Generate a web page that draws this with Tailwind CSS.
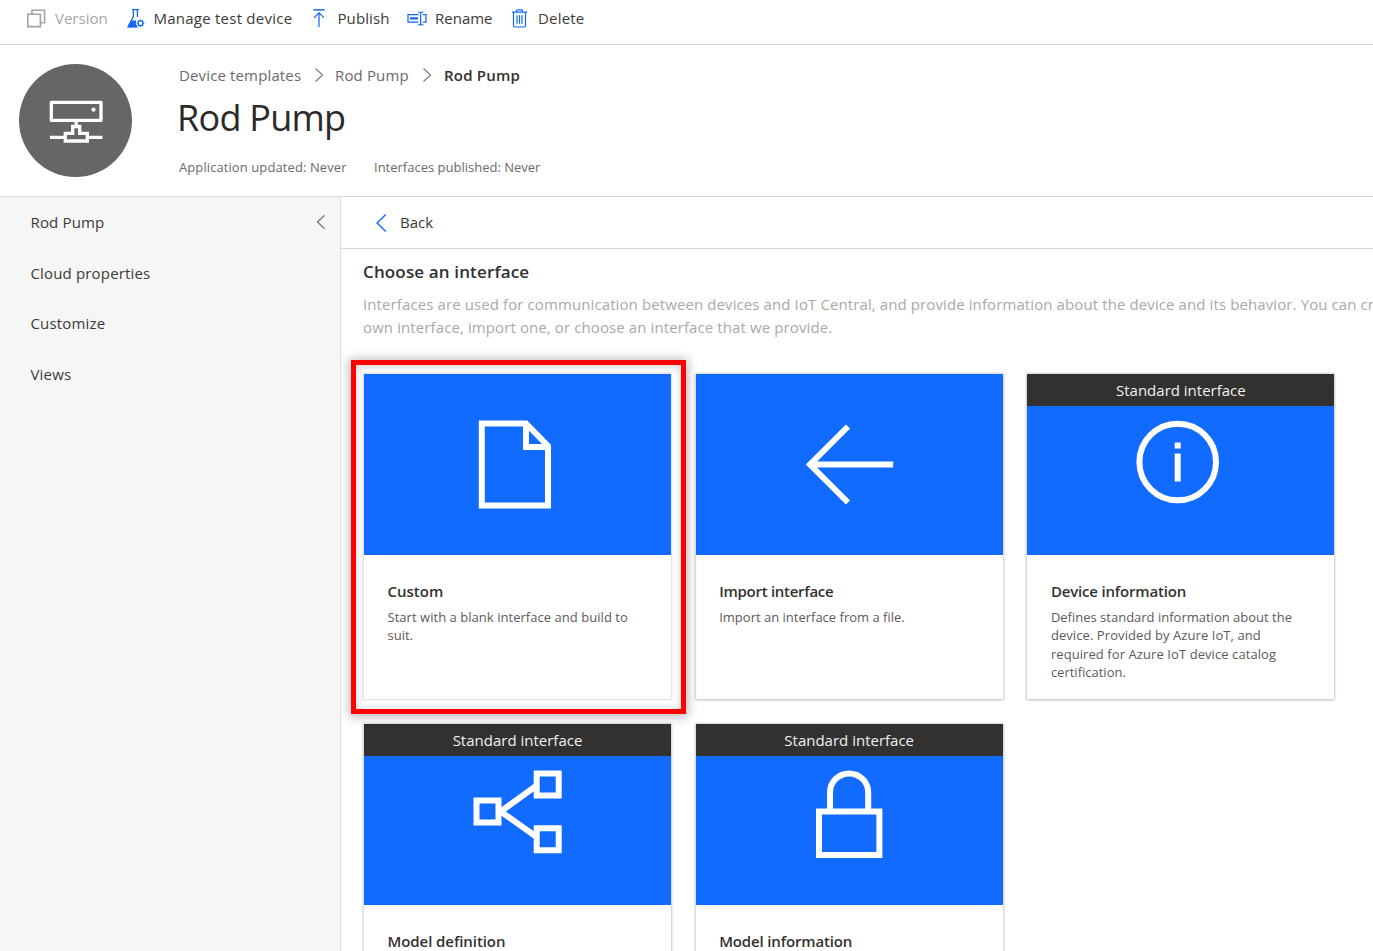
<!DOCTYPE html>
<html lang="en">
<head>
<meta charset="utf-8">
<title>Rod Pump - Device templates</title>
<script src="https://cdn.jsdelivr.net/npm/@tailwindcss/browser@4"></script>
</head>
<body class="h-[951px] w-[1373px] overflow-hidden bg-white font-['Open_Sans',sans-serif] text-[15px] text-[#3b3a39]">
<div class="flex h-full flex-col overflow-hidden">
  <!-- Command bar -->
  <nav class="flex h-[45px] shrink-0 border-b border-[#d9d9d9] pl-[26px] leading-[37px]">
    <div class="flex w-[101px] text-[#a6a6a6]">
      <svg class="mt-[9px] mr-[9px] h-[19px] w-[20px] shrink-0" viewBox="0 0 20 19" fill="none" stroke="#a3a3a3" stroke-width="1.6"><path d="M1.8 5.2h12.6v12.4H1.8zM6 5V1.2h12.6v12.6h-4"/></svg>
      <span>Version</span>
    </div>
    <div class="flex w-[183px]">
      <svg class="mt-[8px] mr-[8.500px] h-[20px] w-[18px] shrink-0" viewBox="0 0 18 20" fill="none" stroke="#1168f5" stroke-width="1.3"><path d="M5 1.7h7M6.4 2v6.6L1.4 18.6h7.8M10.4 2v7"/><path d="M4.2 13.2h4.2l-.2 3 1.6 2.6H1.2z" fill="#1168f5"/><circle cx="13.5" cy="15.2" r="2.4"/><path d="M13.5 11.4v1.4M13.5 17.6V19M9.7 15.2h1.4M15.9 15.2h1.4M10.8 12.5l1 1M15.2 16.9l1 1M16.2 12.5l-1 1M11.8 16.9l-1 1" stroke-width="1.1"/></svg>
      <span class="tracking-[0.240px]">Manage test device</span>
    </div>
    <div class="flex w-[97px]">
      <svg class="mt-[8px] mr-[9.500px] h-[20px] w-[18px] shrink-0" viewBox="0 0 18 20" fill="none" stroke="#1168f5" stroke-width="1.2"><path d="M3.5 1.900h11" stroke-width="1.5"/><path d="M9 19V5M4 9.800l5-5 5 5"/></svg>
      <span class="tracking-[0.100px]">Publish</span>
    </div>
    <div class="flex w-[104px]">
      <svg class="mt-[10px] mr-[8px] h-[17px] w-[20px] shrink-0" viewBox="0 0 20 17" fill="none" stroke="#1168f5" stroke-width="1.2"><path d="M11.5 4.6H1v7.6h10.5M16 4.6h3v7.6h-3"/><path d="M3 8.4h8" stroke-width="2.2"/><path d="M11 2c1.600 0 2.700.3 2.700 1.500v10c0 1.200-1.100 1.500-2.700 1.500M16.500 2c-1.600 0-2.800.3-2.800 1.500v10c0 1.200 1.200 1.500 2.800 1.500"/></svg>
      <span>Rename</span>
    </div>
    <div class="flex">
      <svg class="mt-[8px] mr-[10px] h-[20px] w-[17px] shrink-0" viewBox="0 0 17 20" fill="none" stroke="#1168f5" stroke-width="1.2"><path d="M1 4.200h15M2.500 4.400v13.400q0 1.200 1.200 1.200h9.600q1.200 0 1.200-1.200V4.400M5.500 4V2.800q0-1 1-1h4q1 0 1 1V4M6 7.200v8.600M8.500 7.200v8.600M11 7.200v8.600"/></svg>
      <span class="tracking-[0.200px]">Delete</span>
    </div>
  </nav>

  <!-- Template header -->
  <header class="flex h-[152px] shrink-0 border-b border-[#d9d9d9] pl-[19px]">
    <svg class="mt-[19px] h-[113px] w-[113px] shrink-0" viewBox="0 0 113 113" fill="none" stroke="#fff" stroke-width="3.3">
      <circle cx="56.500" cy="56.500" r="56.500" fill="#666" stroke="none"/>
      <rect x="32.300" y="38.300" width="49.700" height="18" stroke-linejoin="round"/>
      <circle cx="74.500" cy="45.700" r="2.100" fill="#fff" stroke="none"/>
      <path d="M57.200 57v5M31 73.400h15M69 73.400h14.500M53.700 69.300V62.500h7v6.800h7.600V77H46.300v-7.700z"/>
    </svg>
    <div class="flex flex-col pl-[47px]">
      <div class="box-content flex h-[22px] items-center pt-[19px] tracking-[0.140px] text-[#6a6a6a]">
        <span class="w-[135px]">Device templates</span>
        <svg class="mr-[11px] h-[14px] w-[10px]" viewBox="0 0 10 14" fill="none" stroke="#777" stroke-width="1.100"><path d="M1.500.5L8.500 7l-7 6.500"/></svg>
        <span class="w-[87px]">Rod Pump</span>
        <svg class="mr-[12px] h-[14px] w-[10px]" viewBox="0 0 10 14" fill="none" stroke="#777" stroke-width="1.100"><path d="M1.500.5L8.500 7l-7 6.500"/></svg>
        <span class="font-semibold tracking-[0.200px] text-[#323130]">Rod Pump</span>
      </div>
      <h1 class="mt-[7px] -ml-[2px] text-[36px] leading-[50px] tracking-[-0.750px] text-[#2b2a29]">Rod Pump</h1>
      <div class="mt-[14px] flex text-[13px] leading-[20px] text-[#6a6a6a]">
        <span class="w-[195px] tracking-[0.090px]">Application updated: Never</span>
        <span>Interfaces published: Never</span>
      </div>
    </div>
  </header>

  <div class="flex min-h-0 flex-1">
    <!-- Side navigation -->
    <aside class="flex w-[341px] shrink-0 flex-col gap-[26.700px] border-r border-[#dcdcdc] bg-[#f6f6f6] pt-[13px] pr-[14px] pl-[30.500px] leading-[24px] tracking-[0.160px]">
      <div class="flex items-center justify-between"><span>Rod Pump</span>
        <svg class="h-[14px] w-[10px]" viewBox="0 0 10 14" fill="none" stroke="#666" stroke-width="1.100"><path d="M8.500.3L1.500 7l7 6.700"/></svg>
      </div>
      <div>Cloud properties</div>
      <div>Customize</div>
      <div>Views</div>
    </aside>

    <main class="flex min-w-0 flex-1 flex-col overflow-hidden">
      <div class="flex h-[52px] shrink-0 items-center border-b border-[#d9d9d9] pl-[34px]">
        <svg class="mr-[13px] h-[18px] w-[12px]" viewBox="0 0 12 18" fill="none" stroke="#1168f5" stroke-width="1.400"><path d="M10.800.5L2 9l8.800 8.500"/></svg>
        <span>Back</span>
      </div>
      <div class="pl-[22px]">
        <h2 class="mt-[11px] text-[17px] leading-[24px] font-semibold tracking-[0.140px] text-[#323130]">Choose an interface</h2>
        <p class="mt-[9px] leading-[23px] tracking-[0.103px] whitespace-nowrap text-[#a9a9a9]"><span>Interfaces are used for communication between devices and IoT Central, and provide information about the device and its behavior. You can create your</span><br><span>own interface, import one, or choose an interface that we provide.</span></p>
      </div>

      <div class="mt-[35px] ml-[23px] grid grid-cols-[307px_307px_307px] gap-x-[24.700px] gap-y-[25px]">
        <section class="relative h-[325px] bg-white">
          <div class="pointer-events-none absolute -top-[14px] -left-[13px] h-[354px] w-[335px] border-5 border-[#fe0000] shadow-[0_1px_10px_2px_rgba(0,0,0,0.27),inset_0_1px_8px_rgba(0,0,0,0.2)]"></div>
          <div class="relative h-full bg-white shadow-[0_0_2px_1px_rgba(0,0,0,0.15)]">
            <svg class="block h-[181px] w-[307px] bg-[#126bff]" viewBox="0 0 307 181" fill="none" stroke="#fff" stroke-width="6"><path d="M117.800 49.500H162l22 22.500v59.500h-66.200zM162 49.500V73h22"/></svg>
            <div class="px-[23.500px] pt-[25px]">
              <h3 class="leading-[22px] font-semibold text-[#323130]">Custom</h3>
              <p class="mt-[6px] text-[13px] leading-[18.400px] tracking-[0.040px] whitespace-nowrap text-[#5c5b5a]">Start with a blank interface and build to<br>suit.</p>
            </div>
          </div>
        </section>

        <section class="h-[325px] bg-white shadow-[0_0_2px_1px_rgba(0,0,0,0.15),0_1px_3px_rgba(0,0,0,0.15)]">
          <svg class="block h-[181px] w-[307px] bg-[#126bff]" viewBox="0 0 307 181" fill="none" stroke="#fff" stroke-width="6"><path d="M197.200 90.500H114M152 52.500l-38 38 38 38"/></svg>
          <div class="px-[23.500px] pt-[25px]">
            <h3 class="leading-[22px] font-semibold tracking-[-0.280px] text-[#323130]">Import interface</h3>
            <p class="mt-[6px] text-[13px] leading-[18.400px] whitespace-nowrap text-[#5c5b5a]">Import an interface from a file.</p>
          </div>
        </section>

        <section class="h-[325px] bg-white shadow-[0_0_2px_1px_rgba(0,0,0,0.15),0_1px_3px_rgba(0,0,0,0.15)]">
          <div class="h-[32px] bg-[#323130] text-center leading-[33px] text-[#f0f0f0]">Standard interface</div>
          <svg class="block h-[149px] w-[307px] bg-[#126bff]" viewBox="0 0 307 149" fill="none" stroke="#fff" stroke-width="6"><circle cx="150.700" cy="56" r="38.300"/><path d="M150.700 36.500v6M150.700 47.500v28"/></svg>
          <div class="px-[23.500px] pt-[25px]">
            <h3 class="leading-[22px] font-semibold tracking-[-0.180px] text-[#323130]">Device information</h3>
            <p class="mt-[6px] text-[13px] leading-[18.400px] whitespace-nowrap text-[#5c5b5a]"><span>Defines standard information about the</span><br><span class="tracking-[0.080px]">device. Provided by Azure IoT, and</span><br><span class="tracking-[0.080px]">required for Azure IoT device catalog</span><br><span>certification.</span></p>
          </div>
        </section>

        <section class="h-[325px] bg-white shadow-[0_0_2px_1px_rgba(0,0,0,0.15),0_1px_3px_rgba(0,0,0,0.15)]">
          <div class="h-[32px] bg-[#323130] text-center leading-[33px] text-[#f0f0f0]">Standard interface</div>
          <svg class="block h-[149px] w-[307px] bg-[#126bff]" viewBox="0 0 307 149" fill="none" stroke="#fff" stroke-width="6"><path d="M112.500 44.500h22v22h-22zM172.700 17.500h22v22h-22zM172.700 72.200h22v22h-22z"/><path d="M172.700 29.500l-36 26 36 25.500" stroke-linejoin="bevel"/></svg>
          <div class="px-[23.500px] pt-[25px]">
            <h3 class="leading-[22px] font-semibold tracking-[-0.080px] text-[#323130]">Model definition</h3>
          </div>
        </section>

        <section class="h-[325px] bg-white shadow-[0_0_2px_1px_rgba(0,0,0,0.15),0_1px_3px_rgba(0,0,0,0.15)]">
          <div class="h-[32px] bg-[#323130] text-center leading-[33px] text-[#f0f0f0]">Standard interface</div>
          <svg class="block h-[149px] w-[307px] bg-[#126bff]" viewBox="0 0 307 149" fill="none" stroke="#fff" stroke-width="6"><path d="M123 55.500h60.400V99H123zM134 55.500V36.500a19 19 0 0 1 38.200 0v19"/></svg>
          <div class="px-[23.500px] pt-[25px]">
            <h3 class="leading-[22px] font-semibold tracking-[-0.160px] text-[#323130]">Model information</h3>
          </div>
        </section>
      </div>
    </main>
  </div>
</div>
</body>
</html>
